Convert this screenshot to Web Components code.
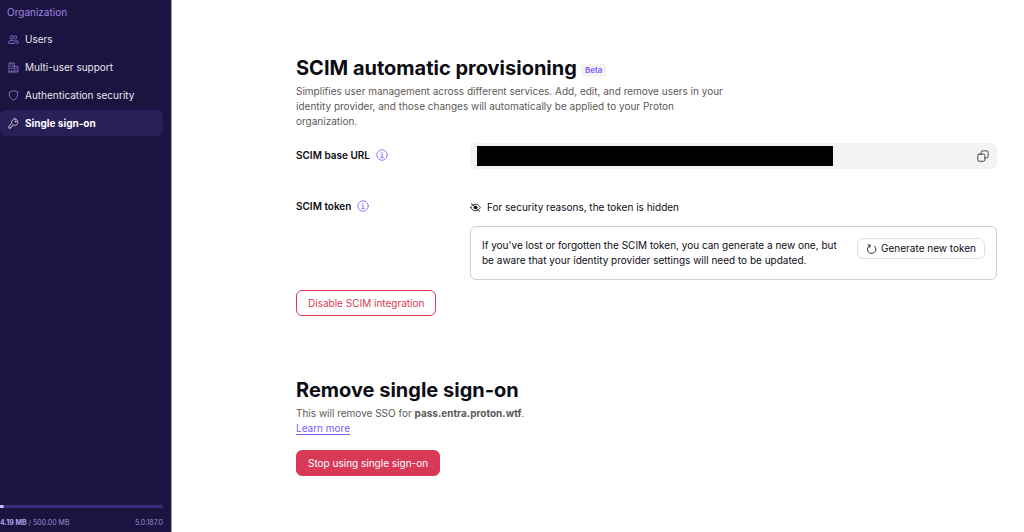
<!DOCTYPE html>
<html lang="en">
<head>
<meta charset="utf-8">
<meta name="viewport" content="width=device-width, initial-scale=1">
<title>Single sign-on</title>
<style>
    body {
        margin: 0;
        font: 10px/15px Inter, "Liberation Sans", sans-serif;
        color: #0c0c14;
        background: #fff;
        --primary: #7a5cff;
        --danger: #d83a55;
        --weak: #5c5958;
        --border: #d1cfcd;
    }
</style>
</head>
<body>
<app-shell>
    <side-nav slot="sidebar" heading="Organization">
        <nav-item icon="users">Users</nav-item>
        <nav-item icon="building">Multi-user support</nav-item>
        <nav-item icon="shield">Authentication security</nav-item>
        <nav-item icon="key" current>Single sign-on</nav-item>
        <storage-meter slot="footer" used="4.19 MB" total="500.00 MB" version="5.0.187.0"></storage-meter>
    </side-nav>

    <settings-section heading="SCIM automatic provisioning" badge="Beta">
        <span slot="description">Simplifies user management across different services. Add, edit, and remove users in your identity provider, and those changes will automatically be applied to your Proton organization.</span>
        <settings-row label="SCIM base URL">
            <copy-field></copy-field>
        </settings-row>
        <settings-row label="SCIM token" class="token">
            <token-panel></token-panel>
        </settings-row>
        <action-button variant="outline-danger">Disable SCIM integration</action-button>
    </settings-section>

    <settings-section heading="Remove single sign-on">
        <span slot="description">This will remove SSO for <b>pass.entra.proton.wtf</b>.<br><a href="#learn-more" style="color: var(--primary); text-underline-offset: 2px">Learn more</a></span>
        <action-button variant="danger">Stop using single sign-on</action-button>
    </settings-section>
</app-shell>

<script>
    const ICONS = {
        users: '<circle cx="5.5" cy="5" r="2.5"/><path d="M1 13v-.5C1 10.500 2.500 9.500 4 9.500h3c1.500 0 3 1 3 3v.5zM9.500 2.800A2.300 2.300 0 1 1 10 7.200M11 9.500h1c1.800 0 3 1 3 3v.5h-3"/>',
        building: '<path d="M1.500 14.500v-13h7.500v13M9 6.500h5.500v8H1M4 4.500h.5M6.500 4.500H7M4 7h.5M6.500 7H7M4 9.500h.5M6.500 9.500H7M5.300 14.500V12M11.700 9v.5M11.700 11.500v.5"/>',
        shield: '<path d="M8 1.200 2 3v4.500c0 3.200 2.800 5.800 6 7.300 3.200-1.500 6-4.100 6-7.300V3z"/>',
        key: '<path d="M10 1.200a4.800 4.800 0 0 0-4.500 6.300L1.200 11.800v3h2.600v-1.800h2v-1.900l1.200-1.100A4.800 4.800 0 1 0 10 1.200z"/><circle cx="11" cy="5" r=".8"/>',
        info: '<circle cx="8" cy="8" r="7"/><path d="M6.800 7H8.200v4.500M6.500 11.500h3.300M7.900 4.300v.7"/>',
        copy: '<rect x="1" y="5.500" width="9.500" height="9.500" rx="1.800"/><path d="M5.500 5.500V3A1.800 1.800 0 0 1 7.300 1.200H13A1.800 1.800 0 0 1 14.800 3v5.700A1.800 1.800 0 0 1 13 10.500h-2.500"/>',
        hidden: '<path d="M1 8c1.600-3 4.100-4.700 7-4.700S13.400 5 15 8c-1.600 3-4.100 4.700-7 4.700S2.600 11 1 8zM2 2.500l12 11"/><circle cx="8" cy="8" r="2.200" fill="currentColor"/>',
        refresh: '<path d="M5.500 3.400A6.200 6.200 0 1 0 12.500 4.500M3 2.600l3 .6-.6 3.200"/>'
    };

    function icon(name) {
        return `<svg class="icon" viewBox="0 0 16 16" fill="none" stroke="currentColor" stroke-width="1.2" stroke-linejoin="round" stroke-linecap="round" aria-hidden="true">${ICONS[name]}</svg>`;
    }

    class AppShell extends HTMLElement {
        constructor() {
            super();
            this.attachShadow({ mode: "open" });
            this.shadowRoot.innerHTML = `
                <style>
                    :host {
                        display: grid;
                        grid-template-columns: 172px 1fr;
                        min-height: 100vh;
                    }
                    main {
                        display: flex;
                        flex-direction: column;
                        gap: 60px;
                        padding: 54px 27px 54px 124px;
                    }
                </style>
                <slot name="sidebar"></slot>
                <main><slot></slot></main>
            `;
        }
    }

    class SideNav extends HTMLElement {
        constructor() {
            super();
            this.attachShadow({ mode: "open" });
            this.shadowRoot.innerHTML = `
                <style>
                    :host {
                        display: flex;
                        flex-direction: column;
                        justify-content: space-between;
                        box-sizing: border-box;
                        padding: 5px 8px 2px 0;
                        border-right: 1px solid #a29db3;
                        background: #1b1340;
                    }
                    h2 {
                        margin: 0 0 6px 7px;
                        font: inherit;
                        color: #9b86e0;
                    }
                    nav {
                        display: grid;
                        gap: 2px;
                    }
                </style>
                <div>
                    <h2></h2>
                    <nav><slot></slot></nav>
                </div>
                <slot name="footer"></slot>
            `;
        }

        connectedCallback() {
            this.shadowRoot.querySelector("h2").textContent = this.getAttribute("heading");
        }
    }

    class NavItem extends HTMLElement {
        constructor() {
            super();
            this.attachShadow({ mode: "open" });
        }

        connectedCallback() {
            this.shadowRoot.innerHTML = `
                <style>
                    :host { display: block; }
                    a {
                        display: flex;
                        align-items: center;
                        gap: 6px;
                        height: 26px;
                        padding-left: 8px;
                        border-radius: 6px;
                        color: #e8e6ee;
                        text-decoration: none;
                    }
                    .icon {
                        width: 11px;
                        height: 11px;
                        color: #9480d8;
                    }
                    :host([current]) a {
                        background: #2a1f59;
                        color: #fff;
                        font-weight: 700;
                    }
                    :host([current]) .icon { color: #d8d4e6; }
                </style>
                <a href="#${this.getAttribute("icon")}">${icon(this.getAttribute("icon"))}<slot></slot></a>
            `;
        }
    }

    class StorageMeter extends HTMLElement {
        constructor() {
            super();
            this.attachShadow({ mode: "open" });
        }

        connectedCallback() {
            this.shadowRoot.innerHTML = `
                <style>
                    :host {
                        display: block;
                        font-size: 7px;
                        color: #9d8ed4;
                    }
                    .track {
                        height: 3px;
                        margin-bottom: 7px;
                        border-radius: 0 2px 2px 0;
                        background: #3c2d7c;
                    }
                    .bar {
                        width: 4px;
                        height: 3px;
                        border-radius: 0 2px 2px 0;
                        background: #c9bcff;
                    }
                    .line {
                        display: flex;
                        justify-content: space-between;
                    }
                    b { color: #b3a3ee; }
                </style>
                <div class="track"><div class="bar"></div></div>
                <div class="line">
                    <span><b>${this.getAttribute("used")}</b> / ${this.getAttribute("total")}</span>
                    <span>${this.getAttribute("version")}</span>
                </div>
            `;
        }
    }

    class SettingsSection extends HTMLElement {
        constructor() {
            super();
            this.attachShadow({ mode: "open" });
        }

        connectedCallback() {
            const badge = this.getAttribute("badge");
            this.shadowRoot.innerHTML = `
                <style>
                    :host { display: block; }
                    header {
                        display: flex;
                        align-items: center;
                        gap: 4px;
                    }
                    h1 {
                        margin: 0;
                        font-size: 20px;
                        line-height: 28px;
                        font-weight: 700;
                    }
                    .badge {
                        margin-top: 4px;
                        padding: 0 4px;
                        border-radius: 3px;
                        background: #f5f4f2;
                        color: var(--primary);
                        font-size: 8px;
                        line-height: 13px;
                        font-weight: 600;
                    }
                    p {
                        max-width: 440px;
                        margin: 2px 0 14px;
                        color: var(--weak);
                    }
                </style>
                <header><h1>${this.getAttribute("heading")}</h1>${badge ? `<span class="badge">${badge}</span>` : ""}</header>
                <p><slot name="description"></slot></p>
                <slot></slot>
            `;
        }
    }

    class SettingsRow extends HTMLElement {
        constructor() {
            super();
            this.attachShadow({ mode: "open" });
        }

        connectedCallback() {
            this.shadowRoot.innerHTML = `
                <style>
                    :host {
                        display: grid;
                        grid-template-columns: 174px 1fr;
                        margin-bottom: 25px;
                    }
                    :host(.token) { margin-bottom: 10px; }
                    .label {
                        display: flex;
                        align-items: center;
                        gap: 6px;
                        height: 24px;
                        font-weight: 600;
                    }
                    button {
                        display: flex;
                        padding: 0;
                        border: 0;
                        background: none;
                        color: #8a6eff;
                    }
                    .icon {
                        width: 12px;
                        height: 12px;
                    }
                </style>
                <div class="label">${this.getAttribute("label")}<button aria-label="More info">${icon("info")}</button></div>
                <slot></slot>
            `;
        }
    }

    class CopyField extends HTMLElement {
        constructor() {
            super();
            this.attachShadow({ mode: "open" });
            this.shadowRoot.innerHTML = `
                <style>
                    :host {
                        display: flex;
                        align-items: center;
                        justify-content: space-between;
                        height: 26px;
                        padding: 0 8px 0 7px;
                        border-radius: 6px;
                        background: #f4f3f2;
                    }
                    .redacted {
                        width: 356px;
                        height: 20px;
                        background: #000;
                    }
                    button {
                        display: flex;
                        padding: 0;
                        border: 0;
                        background: none;
                        color: #33313a;
                    }
                    .icon {
                        width: 12px;
                        height: 12px;
                    }
                </style>
                <div class="redacted"></div>
                <button aria-label="Copy">${icon("copy")}</button>
            `;
        }
    }

    class TokenPanel extends HTMLElement {
        constructor() {
            super();
            this.attachShadow({ mode: "open" });
            this.shadowRoot.innerHTML = `
                <style>
                    :host { display: block; }
                    .note {
                        display: flex;
                        align-items: center;
                        gap: 6px;
                        height: 26px;
                        margin-bottom: 6px;
                    }
                    .note .icon {
                        width: 11px;
                        height: 11px;
                    }
                    .card {
                        display: flex;
                        align-items: flex-start;
                        justify-content: space-between;
                        gap: 12px;
                        padding: 11px;
                        border: 1px solid var(--border);
                        border-radius: 6px;
                    }
                    p { margin: 0; }
                </style>
                <div class="note">${icon("hidden")}<span>For security reasons, the token is hidden</span></div>
                <div class="card">
                    <p>If you've lost or forgotten the SCIM token, you can generate a new one, but be aware that your identity provider settings will need to be updated.</p>
                    <action-button variant="small" icon="refresh">Generate new token</action-button>
                </div>
            `;
        }
    }

    class ActionButton extends HTMLElement {
        constructor() {
            super();
            this.attachShadow({ mode: "open" });
        }

        connectedCallback() {
            const name = this.getAttribute("icon");
            this.shadowRoot.innerHTML = `
                <style>
                    :host {
                        display: block;
                        flex: none;
                    }
                    button {
                        display: flex;
                        align-items: center;
                        gap: 4px;
                        height: 26px;
                        padding: 0 11px;
                        border: 1px solid var(--border);
                        border-radius: 6px;
                        background: #fff;
                        color: inherit;
                        font: inherit;
                        white-space: nowrap;
                    }
                    .icon {
                        width: 11px;
                        height: 11px;
                    }
                    :host([variant="small"]) button {
                        height: 21px;
                        padding: 0 8px;
                        border-color: #e0dfde;
                    }
                    :host([variant="outline-danger"]) button {
                        border-color: var(--danger);
                        color: var(--danger);
                    }
                    :host([variant="danger"]) button {
                        border-color: var(--danger);
                        background: var(--danger);
                        color: #fff;
                    }
                </style>
                <button>${name ? icon(name) : ""}<slot></slot></button>
            `;
        }
    }

    customElements.define("app-shell", AppShell);
    customElements.define("side-nav", SideNav);
    customElements.define("nav-item", NavItem);
    customElements.define("storage-meter", StorageMeter);
    customElements.define("settings-section", SettingsSection);
    customElements.define("settings-row", SettingsRow);
    customElements.define("copy-field", CopyField);
    customElements.define("token-panel", TokenPanel);
    customElements.define("action-button", ActionButton);
</script>
</body>
</html>
